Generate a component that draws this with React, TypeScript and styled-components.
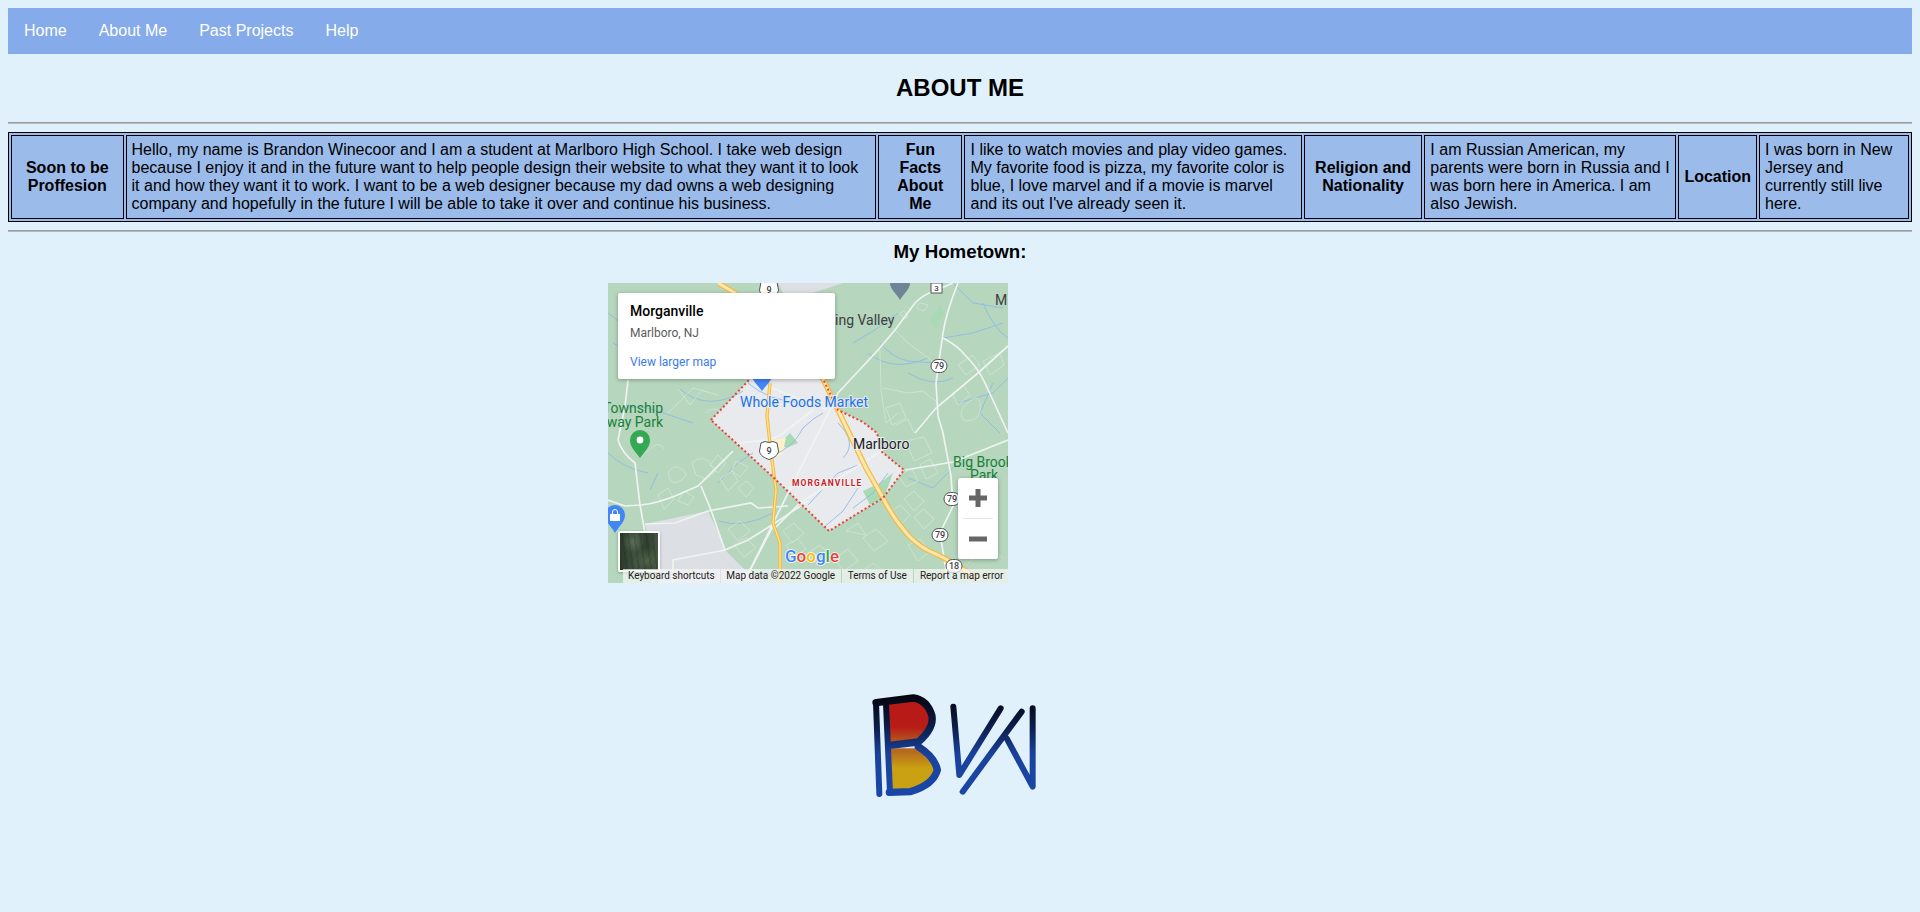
import React from "react";
import styled, {createGlobalStyle} from "styled-components";

const GlobalStyle = createGlobalStyle`
    body {
        margin: 8px;
        background: #e0f1fb;
        color: #000;
        font-family: "Liberation Sans", Arial, sans-serif;
        font-size: 16px;
    }
`;

const NavBar = styled.ul`
    display: flex;
    margin: 0;
    padding: 0;
    list-style: none;
    background: #85abea;
`;

const NavLink = styled.a`
    display: block;
    padding: 14px 16px;
    color: #fff;
    text-decoration: none;
`;

const Title = styled.h2`
    margin: 20px 0;
    font-size: 24px;
    line-height: 28px;
    text-align: center;
`;

const Rule = styled.hr`
    margin: 8px 0;
    border: 0;
    border-top: 1px solid #9c9c9c;
    border-bottom: 1px solid #b4bcc0;
`;

const InfoTable = styled.table`
    width: 100%;
    border: 1px solid #000;
    border-spacing: 2px;
    background: #9bbbea;
`;

const HeadCell = styled.th`
    border: 1px solid #000;
    padding: 5px;
    font-weight: bold;
    text-align: center;
`;

const BodyCell = styled.td`
    border: 1px solid #000;
    padding: 5px;
`;

const SubTitle = styled.h3`
    margin: 9px 0 21px;
    font-size: 18.72px;
    line-height: 21px;
    text-align: center;
`;

const MapFrame = styled.div`
    position: relative;
    width: 400px;
    height: 300px;
    margin-left: 600px;
    overflow: hidden;
    background: #b6d6bd;
    font-family: Roboto, "Liberation Sans", sans-serif;
`;

const MapArt = styled.svg`
    display: block;
    font-family: Roboto, "Liberation Sans", sans-serif;
`;

const InfoCard = styled.div`
    position: absolute;
    top: 10px;
    left: 10px;
    width: 193px;
    height: 66px;
    padding: 10px 12px;
    background: #fff;
    border-radius: 2px;
    box-shadow: 0 1px 4px rgba(0, 0, 0, 0.3);
`;

const PlaceName = styled.div`
    font-size: 14px;
    font-weight: 500;
    line-height: 16px;
    color: #000;
`;

const PlaceArea = styled.div`
    margin-top: 6px;
    font-size: 12px;
    line-height: 16px;
    color: #5b5b5b;
`;

const LargerMap = styled.a`
    display: block;
    margin-top: 13px;
    font-size: 12px;
    line-height: 16px;
    color: #3a7bea;
    text-decoration: none;
`;

const ZoomBox = styled.div`
    position: absolute;
    top: 195px;
    left: 350px;
    display: flex;
    flex-direction: column;
    align-items: center;
    width: 40px;
    height: 81px;
    background: #fff;
    border-radius: 2px;
    box-shadow: 0 1px 4px rgba(0, 0, 0, 0.3);
`;

const ZoomButton = styled.svg`
    display: block;
    width: 40px;
    height: 40px;
`;

const ZoomDivider = styled.div`
    width: 30px;
    height: 1px;
    background: #e6e6e6;
`;

const SatelliteThumb = styled.div`
    position: absolute;
    top: 248px;
    left: 10px;
    box-sizing: border-box;
    width: 42px;
    height: 41px;
    border: 2px solid #fff;
    border-radius: 2px;
    background:
        repeating-linear-gradient(82deg, rgba(20, 30, 20, 0.18) 0 2px, transparent 2px 6px),
        radial-gradient(circle at 35% 25%, rgba(120, 140, 110, 0.5), transparent 30%),
        radial-gradient(circle at 70% 75%, rgba(95, 110, 85, 0.7), transparent 35%),
        linear-gradient(90deg, #2a3a2a, #3f5240 40%, #2f3f2e 70%, #465644);
    box-shadow: 0 1px 3px rgba(0, 0, 0, 0.3);
`;

const Attribution = styled.div`
    position: absolute;
    left: 15px;
    bottom: 0;
    display: flex;
    height: 14px;
    font-size: 10px;
    line-height: 14px;
    color: #202020;
`;

const AttributionItem = styled.span<{ $pad: number }>`
    padding: 0 ${({$pad}) => $pad}px;
    background: rgba(245, 245, 245, 0.72);
    white-space: nowrap;
    & + & {
        margin-left: 1px;
    }
`;

const LogoWrap = styled.div`
    display: flex;
    justify-content: center;
    margin-top: 97px;
`;

const cells = [
    {
        head: "Soon to be Proffesion",
        body: "Hello, my name is Brandon Winecoor and I am a student at Marlboro High School. I take web design because I enjoy it and in the future want to help people design their website to what they want it to look it and how they want it to work. I want to be a web designer because my dad owns a web designing company and hopefully in the future I will be able to take it over and continue his business.",
    },
    {
        head: "Fun Facts About Me",
        body: "I like to watch movies and play video games. My favorite food is pizza, my favorite color is blue, I love marvel and if a movie is marvel and its out I've already seen it.",
    },
    {
        head: "Religion and Nationality",
        body: "I am Russian American, my parents were born in Russia and I was born here in America. I am also Jewish.",
    },
    {
        head: "Location",
        body: "I was born in New Jersey and currently still live here.",
    },
];

const mainRoads = [
    "M307 20Q315 12 324 9L345 0",
    "M307 20L287 47L270 67L230 110L222 127L185 200L142 287L130 300",
    "M162 104L219 127",
    "M132 160L159 157Q170 155 179 147L205 127",
    "M165 247L192 220L275 167",
    "M297 187L345 179L400 157",
    "M350 0Q338 30 335 50L328 100L330 133L335 150L343 193L345 223L332 250L340 300",
    "M335 55Q350 63 357 72Q370 85 377 100L400 150",
    "M400 63L370 90L328 125L307 150",
    "M125 168L90 203L67 213Q50 220 33 222L17 223L0 217",
    "M93 203L103 227L112 253L117 267L65 277L65 300",
    "M37 241L67 240L100 228L143 220L150 225L180 223",
    "M10 157Q14 170 27 180L32 222L37 250L45 300",
    "M117 267L140 257L167 240L200 218",
    "M137 297L165 243",
    "M20 97L17 123L10 157",
];

const minorRoads = [
    "M38 170Q50 155 56 166",
    "M60 190Q66 180 74 186Q82 192 72 198Q62 204 60 190Z",
    "M84 180Q92 172 100 178L108 188L98 196L88 192Z",
    "M110 172L118 180L110 190L102 182Z",
    "M112 196L124 188L130 198L120 208Z",
    "M128 178L140 184L132 194L124 188Z",
    "M130 205L138 198L146 205L138 214Z",
    "M50 212L60 205L66 216L56 226Z",
    "M76 208L86 214L80 222L70 218Z",
    "M120 246L132 238L142 248L130 258Z",
    "M126 262L138 255L148 265L136 274Z",
    "M175 248L186 240L196 250L184 260Z",
    "M178 262L190 256L198 266L186 274Z",
    "M200 270L212 262L222 272L210 282Z",
    "M226 276L240 266L250 278L236 288Z",
    "M255 255L268 246L280 258L266 268Z",
    "M238 248L250 240L258 252Z",
    "M282 230L292 222L302 232L292 242Z",
    "M296 216L306 208L316 218L306 228Z",
    "M306 234L316 226L326 236L316 246Z",
    "M298 158L316 154L324 170L306 178Z",
    "M312 182L322 176L330 190L318 196Z",
    "M290 192L304 186L310 198L298 204Z",
    "M355 125Q370 108 372 120Q375 138 358 138Q350 134 355 125Z",
    "M350 82L365 72L372 82L358 92Z",
    "M345 112L355 102L362 112L350 122Z",
    "M375 78L392 70L396 82L382 92Z",
    "M312 20L320 22L316 28L308 25Z",
    "M292 30L296 28L300 34L296 36Z",
    "M275 105L300 110L315 108L330 120",
    "M272 67L273 107L278 140L290 130",
    "M285 45L300 60L320 75L328 80",
    "M278 125L292 120L298 135L284 142Z",
    "M288 142L300 136L306 150",
    "M60 130L85 105L110 112",
    "M70 105L82 122L95 106",
    "M360 280L380 262L395 275",
    "M300 262L312 256L322 268L310 278Z",
    "M250 292L265 280L280 292",
    "M98 130Q105 122 115 130",
];

const water = [
    "M0 30Q15 40 28 55Q40 75 30 85",
    "M140 100Q160 118 195 120",
    "M165 172Q185 165 195 145Q205 135 215 130",
    "M200 222L230 190L250 182",
    "M272 60Q285 75 300 78L325 80",
    "M335 55L365 50L395 40",
    "M290 30L270 45L245 60",
    "M385 100L372 130L392 150",
    "M10 130Q25 118 55 130L85 140",
    "M0 170Q15 185 40 190",
    "M50 190L42 207",
    "M110 200L130 180L145 170",
    "M110 238Q135 246 165 230",
    "M215 245L235 228L250 205",
    "M280 190L265 210L245 225",
    "M260 70Q285 90 320 75",
    "M350 120L385 110L400 95",
    "M375 20Q385 45 400 55",
    "M345 0L365 20L395 25",
    "M5 60L30 75L60 65",
    "M70 105Q100 130 135 108",
    "M230 140Q250 160 235 175",
    "M300 90Q325 105 345 95",
    "M345 185L325 205L300 195",
];

function Shield({x, y, label}: { x: number; y: number; label: string }) {
    return (
        <g transform={`translate(${x} ${y})`}>
            <path d="M-8 -7L-4 -8.500L0 -7.500L4 -8.500L8 -7L9.500 1C9 6 4 8 0 9.500C-4 8 -9 6 -9.500 1Z" fill="#fff" stroke="#555" strokeWidth="1"/>
            <text textAnchor="middle" y="3.5" fontSize="9" fontWeight="500" fill="#3c4043">{label}</text>
        </g>
    );
}

function Oval({x, y, label}: { x: number; y: number; label: string }) {
    return (
        <g transform={`translate(${x} ${y})`}>
            <rect x="-8" y="-6.5" width="16" height="13" rx="6.5" fill="#fff" stroke="#555" strokeWidth="1"/>
            <text textAnchor="middle" y="3.2" fontSize="9" fontWeight="500" fill="#3c4043">{label}</text>
        </g>
    );
}

function MapDrawing() {
    const boundary = "M103 137L142 96L165 70L200 70L215 96L230 127L255 139L269 150L274 169L296 187L275 215L221 248L165 194Z";
    const highway = "M110 0L127 10L170 50L215 96L230 127L258 185L275 215Q285 235 300 252Q312 265 330 272Q342 278 350 283L372 297";
    const route9 = "M162 100L159 133L163 170L168 207L165 240L172 260L172 300";
    return (
        <MapArt width="400" height="300" viewBox="0 0 400 300">
            <rect width="400" height="300" fill="#b6d6bd"/>
            <path d="M37 241L100 228L112 253L117 267L150 300L50 300Z" fill="#dcdfe4"/>
            <path d="M170 0L235 0L205 10L175 10Z" fill="#dcdfe4"/>
            <path d={boundary} fill="#e8eaed"/>
            <path d="M255 208L272 200L285 190L276 215L262 222Z" fill="#a8dab5"/>
            <path d="M172 160L182 150L190 160L178 165Z" fill="#a8dab5"/>
            <path d="M160 158L178 155L174 172L162 175Z" fill="#fdf0cd"/>
            <path d="M322 38L332 22L336 30L328 45Z" fill="#a8dab5"/>
            {water.map((d) => <path key={d} d={d} fill="none" stroke="#8fbbe6" strokeWidth="0.9"/>)}
            {minorRoads.map((d) => <path key={d} d={d} fill="none" stroke="#d2e5d8" strokeWidth="0.8"/>)}
            {mainRoads.map((d) => <path key={d} d={d} fill="none" stroke="#eff3f1" strokeWidth="1.7"/>)}
            <path d={route9} fill="none" stroke="#f4b942" strokeWidth="3.4"/>
            <path d={route9} fill="none" stroke="#fde293" strokeWidth="1.4"/>
            <path d={highway} fill="none" stroke="#f4b942" strokeWidth="5.5"/>
            <path d={highway} fill="none" stroke="#fde7ae" strokeWidth="3"/>
            <path d={boundary} fill="none" stroke="#ea4335" strokeWidth="2" strokeDasharray="2 2.4"/>

            <path d="M142 85H166C166 97 158 102 154 108C150 102 142 97 142 85Z" fill="#4285f4"/>
            <path d="M292 17C288 10 282 6 282 0H302C302 6 296 10 292 17Z" fill="#6f8497"/>
            <path d="M32 175C27 168 22 164 22 157A10 10 0 0 1 42 157C42 164 37 168 32 175Z" fill="#34a853"/>
            <circle cx="32" cy="157" r="3.4" fill="#fff"/>
            <path d="M7 250C3 243 -3 239 -3 232A10 10 0 0 1 17 232C17 239 11 243 7 250Z" fill="#4285f4"/>
            <path d="M2 231H12V238H2Z" fill="#fff"/>
            <path d="M4.5 231V229A2.5 2.5 0 0 1 9.500 229V231" fill="none" stroke="#fff" strokeWidth="1"/>

            <Shield x={161} y={6} label="9"/>
            <Shield x={161} y={167} label="9"/>
            <rect x="323" y="0" width="11" height="10" fill="#fff" stroke="#555" strokeWidth="1"/>
            <text x="328.500" y="8" textAnchor="middle" fontSize="8" fontWeight="500" fill="#3c4043">3</text>
            <Oval x={331} y={83} label="79"/>
            <Oval x={344} y={216} label="79"/>
            <Oval x={332} y={252} label="79"/>
            <Oval x={346} y={283} label="18"/>

            <text x="227" y="42" fontSize="14" fill="#3c4043">ing Valley</text>
            <text x="387" y="22" fontSize="14" fill="#3c4043">M</text>
            <text x="132" y="124" fontSize="14" fill="#1a73e8" stroke="#e8eaed" strokeWidth="2" paintOrder="stroke">Whole Foods Market</text>
            <text x="245" y="166" fontSize="14" fill="#202124" stroke="#e8eaed" strokeWidth="2" paintOrder="stroke">Marlboro</text>
            <text x="55" y="130" fontSize="14" textAnchor="end" fill="#188038">Township</text>
            <text x="55" y="144" fontSize="14" textAnchor="end" fill="#188038">way Park</text>
            <text x="345" y="184" fontSize="14" fill="#188038">Big Brook</text>
            <text x="362" y="197" fontSize="14" fill="#188038">Park</text>
            <text x="184" y="203" fontSize="8.500" fontWeight="700" letterSpacing="1.1" fill="#c5221f" stroke="#fff" strokeWidth="1" paintOrder="stroke">MORGANVILLE</text>
            <text x="177" y="279" fontSize="17" fontWeight="500" stroke="#fff" strokeWidth="1.5" paintOrder="stroke">
                <tspan fill="#4285f4">G</tspan>
                <tspan fill="#ea4335">o</tspan>
                <tspan fill="#fbbc05">o</tspan>
                <tspan fill="#4285f4">g</tspan>
                <tspan fill="#34a853">l</tspan>
                <tspan fill="#ea4335">e</tspan>
            </text>
        </MapArt>
    );
}

function Logo() {
    return (
        <svg width="180" height="130" viewBox="60 0 540 390">
            <defs>
                <linearGradient id="ink" gradientUnits="userSpaceOnUse" x1="0" y1="50" x2="0" y2="340">
                    <stop offset="0" stopColor="#05050f"/>
                    <stop offset="0.3" stopColor="#0b1c48"/>
                    <stop offset="0.6" stopColor="#1a429c"/>
                    <stop offset="1" stopColor="#1a47a5"/>
                </linearGradient>
                <linearGradient id="top" gradientUnits="userSpaceOnUse" x1="0" y1="75" x2="0" y2="185">
                    <stop offset="0" stopColor="#b81a16"/>
                    <stop offset="0.6" stopColor="#b81c17"/>
                    <stop offset="1" stopColor="#b5571d"/>
                </linearGradient>
                <linearGradient id="low" gradientUnits="userSpaceOnUse" x1="0" y1="215" x2="0" y2="322">
                    <stop offset="0" stopColor="#b56a20"/>
                    <stop offset="0.45" stopColor="#c9a012"/>
                    <stop offset="1" stopColor="#c9a112"/>
                </linearGradient>
            </defs>
            <path d="M108 68L205 60L246 110L232 155L195 190L116 198Z" fill="url(#top)"/>
            <path d="M116 205L200 205L240 232L260 272L232 318L180 334L122 336Z" fill="url(#low)"/>
            <g fill="none" stroke="url(#ink)" strokeLinecap="round" strokeLinejoin="round">
                <path strokeWidth="18" d="M78 68L88 342"/>
                <path strokeWidth="22" d="M78 68L190 54Q232 60 246 108Q252 145 205 186L118 196"/>
                <path strokeWidth="22" d="M205 200Q255 232 262 270Q250 315 180 335L118 337"/>
                <path strokeWidth="18" d="M108 72L120 337"/>
                <path strokeWidth="18" d="M310 80L328 285L452 85"/>
                <path strokeWidth="18" d="M515 95L338 335"/>
                <path strokeWidth="18" d="M470 175L548 320L548 85"/>
            </g>
        </svg>
    );
}

function App() {
    return (
        <>
            <GlobalStyle/>
            <NavBar>
                {["Home", "About Me", "Past Projects", "Help"].map((label) => (
                    <li key={label}><NavLink href="#">{label}</NavLink></li>
                ))}
            </NavBar>
            <Title>ABOUT ME</Title>
            <Rule/>
            <InfoTable>
                <tbody>
                    <tr>
                        {cells.map((cell) => (
                            <React.Fragment key={cell.head}>
                                <HeadCell>{cell.head}</HeadCell>
                                <BodyCell>{cell.body}</BodyCell>
                            </React.Fragment>
                        ))}
                    </tr>
                </tbody>
            </InfoTable>
            <Rule/>
            <SubTitle>My Hometown:</SubTitle>
            <MapFrame>
                <MapDrawing/>
                <InfoCard>
                    <PlaceName>Morganville</PlaceName>
                    <PlaceArea>Marlboro, NJ</PlaceArea>
                    <LargerMap href="#">View larger map</LargerMap>
                </InfoCard>
                <ZoomBox>
                    <ZoomButton viewBox="0 0 40 40">
                        <path d="M11 20H29M20 11V29" stroke="#666" strokeWidth="5"/>
                    </ZoomButton>
                    <ZoomDivider/>
                    <ZoomButton viewBox="0 0 40 40">
                        <path d="M11 20H29" stroke="#666" strokeWidth="5"/>
                    </ZoomButton>
                </ZoomBox>
                <SatelliteThumb/>
                <Attribution>
                    <AttributionItem $pad={5}>Keyboard shortcuts</AttributionItem>
                    <AttributionItem $pad={5.5}>Map data ©2022 Google</AttributionItem>
                    <AttributionItem $pad={6}>Terms of Use</AttributionItem>
                    <AttributionItem $pad={6}>Report a map error</AttributionItem>
                </Attribution>
            </MapFrame>
            <LogoWrap>
                <Logo/>
            </LogoWrap>
        </>
    );
}

export default App;
